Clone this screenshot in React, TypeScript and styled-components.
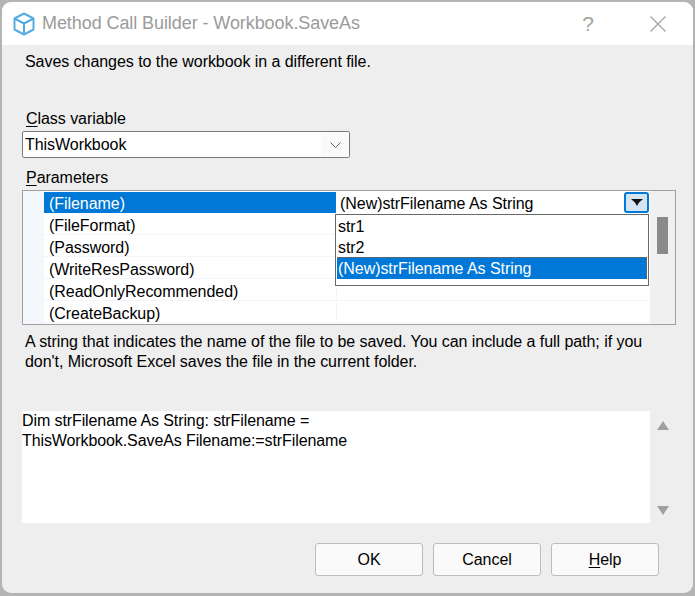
import { createGlobalStyle } from "styled-components";
import styled from "styled-components";

const GlobalStyle = createGlobalStyle`
    html, body {
        margin: 0;
        padding: 0;
        background: #b4b4b4;
    }

    body {
        font-family: "Liberation Sans", Arial, sans-serif;
        font-size: 16px;
        letter-spacing: -0.05px;
        color: #000;
    }
`;

const Frame = styled.div`
    width: 695px;
    height: 596px;
    box-sizing: border-box;
    padding: 2px 2px 3px 2px;
    overflow: hidden;
`;

const Window = styled.div`
    height: 100%;
    display: flex;
    flex-direction: column;
    background: #eeeeee;
    border-radius: 9px;
    overflow: hidden;
`;

const TitleBar = styled.div`
    height: 43px;
    flex-shrink: 0;
    display: flex;
    align-items: center;
    background: #ffffff;
    padding-left: 10px;
`;

const Title = styled.div`
    flex-grow: 1;
    margin-left: 6px;
    font-size: 18px;
    letter-spacing: -0.08px;
    color: #9b9b9b;
    white-space: pre;
`;

const TitleButton = styled.button`
    width: 24px;
    height: 24px;
    padding: 0;
    border: 0;
    background: none;
    display: flex;
    align-items: center;
    justify-content: center;
    color: #a3a3a3;
    font-family: inherit;
    font-size: 21px;
`;

const HelpButton = styled(TitleButton)`
    margin-right: 46px;
`;

const CloseButton = styled(TitleButton)`
    margin-right: 23px;
`;

const Body = styled.div`
    flex-grow: 1;
    display: flex;
    flex-direction: column;
    padding: 0 17px 17px 20px;
`;

const Description = styled.div`
    margin: 8px 0 0 3px;
    height: 18px;
    line-height: 18px;
    white-space: pre;
`;

const FieldLabel = styled.div<{ $top: number }>`
    margin: ${(p) => p.$top}px 0 0 4px;
    height: 18px;
    line-height: 18px;
    white-space: pre;

    u {
        text-underline-offset: 2px;
    }
`;

const Combo = styled.div`
    margin-top: 3px;
    width: 328px;
    height: 27px;
    box-sizing: border-box;
    display: flex;
    align-items: stretch;
    justify-content: space-between;
    line-height: 25px;
    background: #ffffff;
    border: 1px solid #7a7a7a;
    border-radius: 2px;
    padding-left: 2px;
`;

const ComboArrow = styled.div`
    width: 28px;
    display: flex;
    align-items: center;
    justify-content: center;
    background: #fafafa;
`;

const PropertyGrid = styled.div`
    position: relative;
    margin-top: 3px;
    width: 654px;
    height: 135px;
    box-sizing: border-box;
    display: flex;
    background: #f0f0f0;
    border: 1px solid #a0a0a0;
`;

const Gutter = styled.div`
    width: 21px;
    flex-shrink: 0;
    background: #f4f7fc;
`;

const Rows = styled.div`
    width: 606px;
    padding-top: 1px;
    background: #ffffff;
`;

const Row = styled.div`
    display: grid;
    grid-template-columns: 292px 314px;
    height: 22px;
`;

const NameCell = styled.div<{ $selected?: boolean }>`
    height: 21px;
    line-height: 23px;
    box-sizing: border-box;
    padding-left: 5px;
    white-space: pre;
    color: ${(p) => (p.$selected ? "#ffffff" : "#000000")};
    background: ${(p) => (p.$selected ? "#0078d7" : "#ffffff")};
    border-bottom: ${(p) => (p.$selected ? "0" : "1px solid #f2f5fb")};
`;

const ValueCell = styled.div`
    height: 21px;
    line-height: 23px;
    padding-left: 4px;
    white-space: pre;
    border-left: 1px solid #f2f5fb;
    box-sizing: border-box;
    border-bottom: 1px solid #f2f5fb;
`;

const ActiveValueCell = styled(ValueCell)`
    display: flex;
    justify-content: space-between;
    border: 0;
    padding-right: 1px;
`;

const DropButton = styled.div`
    width: 25px;
    height: 21px;
    box-sizing: border-box;
    display: flex;
    align-items: center;
    justify-content: center;
    background: #d5e4f3;
    border: 2px solid #0078d7;
    border-radius: 3px;
`;

const DropList = styled.div`
    position: absolute;
    left: 312px;
    top: 23px;
    width: 314px;
    height: 72px;
    box-sizing: border-box;
    background: #ffffff;
    border: 1px solid #696969;
    padding: 0 1px;
`;

const DropItem = styled.div`
    height: 21px;
    line-height: 23px;
    padding-left: 1px;
    white-space: pre;
    box-sizing: border-box;
`;

const SelectedDropItem = styled(DropItem)`
    height: 22px;
    line-height: 21px;
    color: #ffffff;
    background: #0078d7;
    border-top: 1px dotted #a85a10;
    border-right: 1px dotted #a85a10;
`;

const ScrollTrack = styled.div`
    flex-grow: 1;
    display: flex;
    justify-content: center;
    padding-top: 26px;
`;

const ScrollThumb = styled.div`
    width: 11px;
    height: 37px;
    background: #8a8a8a;
`;

const HelpText = styled.div`
    margin: 7px 0 0 3px;
    width: 640px;
    line-height: 20px;
`;

const CodeRow = styled.div`
    margin-top: 39px;
    display: flex;
`;

const CodeBox = styled.div`
    width: 628px;
    height: 112px;
    box-sizing: border-box;
    background: #ffffff;
    line-height: 20px;
    letter-spacing: -0.1px;
`;

const CodeScroll = styled.div`
    width: 25px;
    display: flex;
    flex-direction: column;
    align-items: center;
    justify-content: space-between;
    padding: 10px 0 8px;
    box-sizing: border-box;
`;

const Actions = styled.div`
    margin-top: 20px;
    padding-left: 293px;
    display: flex;
    gap: 10px;
`;

const ActionButton = styled.button`
    width: 108px;
    height: 33px;
    padding: 0;
    background: #fafafa;
    border: 1px solid #bdbdbd;
    border-radius: 3px;
    font-family: inherit;
    font-size: 16px;
    letter-spacing: inherit;
    color: #000;

    u {
        text-underline-offset: 2px;
    }
`;

const parameters = [
    "(FileFormat)",
    "(Password)",
    "(WriteResPassword)",
    "(ReadOnlyRecommended)",
    "(CreateBackup)",
];

const CubeIcon = () => (
    <svg width="24" height="24" viewBox="0 0 24 24" fill="none" stroke="#55acde" strokeWidth="2" strokeLinejoin="round">
        <path d="M12 1.5 21.5 6.5V17.5L12 22.5 2.5 17.5V6.5Z" />
        <path d="M2.5 6.5 12 11.5 21.5 6.5M12 11.5V22.5" />
    </svg>
);

const CloseIcon = () => (
    <svg width="16" height="16" viewBox="0 0 16 16" fill="none" stroke="#a3a3a3" strokeWidth="1.2">
        <path d="M0.5 0.5 15.5 15.5M15.5 0.5 0.5 15.5" />
    </svg>
);

const ChevronIcon = () => (
    <svg width="11" height="6" viewBox="0 0 11 6" fill="none" stroke="#666666" strokeWidth="1">
        <path d="M0.5 0.5 5.5 5.5 10.5 0.5" />
    </svg>
);

const DropArrow = () => (
    <svg width="12" height="7" viewBox="0 0 12 7">
        <path d="M0 0H12L8 3.5 6 7 4 3.5Z" fill="#111111" />
    </svg>
);

const ScrollArrow = ({ up }: { up?: boolean }) => (
    <svg width="12" height="9" viewBox="0 0 12 9">
        <path d={up ? "M0 9H12L6 0Z" : "M0 0H12L6 9Z"} fill="#a0a0a0" />
    </svg>
);

export default function App() {
    return (
        <>
            <GlobalStyle />
            <Frame>
                <Window>
                    <TitleBar>
                        <CubeIcon />
                        <Title>Method Call Builder - Workbook.SaveAs</Title>
                        <HelpButton>?</HelpButton>
                        <CloseButton>
                            <CloseIcon />
                        </CloseButton>
                    </TitleBar>
                    <Body>
                        <Description>Saves changes to the workbook in a different file.</Description>
                        <FieldLabel $top={39}>
                            <u>C</u>lass variable
                        </FieldLabel>
                        <Combo>
                            ThisWorkbook
                            <ComboArrow>
                                <ChevronIcon />
                            </ComboArrow>
                        </Combo>
                        <FieldLabel $top={11}>
                            <u>P</u>arameters
                        </FieldLabel>
                        <PropertyGrid>
                            <Gutter />
                            <Rows>
                                <Row>
                                    <NameCell $selected>(Filename)</NameCell>
                                    <ActiveValueCell>
                                        (New)strFilename As String
                                        <DropButton>
                                            <DropArrow />
                                        </DropButton>
                                    </ActiveValueCell>
                                </Row>
                                {parameters.map((name) => (
                                    <Row key={name}>
                                        <NameCell>{name}</NameCell>
                                        <ValueCell />
                                    </Row>
                                ))}
                            </Rows>
                            <ScrollTrack>
                                <ScrollThumb />
                            </ScrollTrack>
                            <DropList>
                                <DropItem>str1</DropItem>
                                <DropItem>str2</DropItem>
                                <SelectedDropItem>(New)strFilename As String</SelectedDropItem>
                            </DropList>
                        </PropertyGrid>
                        <HelpText>
                            A string that indicates the name of the file to be saved. You can include a full path; if
                            you don't, Microsoft Excel saves the file in the current folder.
                        </HelpText>
                        <CodeRow>
                            <CodeBox>
                                Dim strFilename As String: strFilename =
                                <br />
                                ThisWorkbook.SaveAs Filename:=strFilename
                            </CodeBox>
                            <CodeScroll>
                                <ScrollArrow up />
                                <ScrollArrow />
                            </CodeScroll>
                        </CodeRow>
                        <Actions>
                            <ActionButton>OK</ActionButton>
                            <ActionButton>Cancel</ActionButton>
                            <ActionButton>
                                <u>H</u>elp
                            </ActionButton>
                        </Actions>
                    </Body>
                </Window>
            </Frame>
        </>
    );
}
